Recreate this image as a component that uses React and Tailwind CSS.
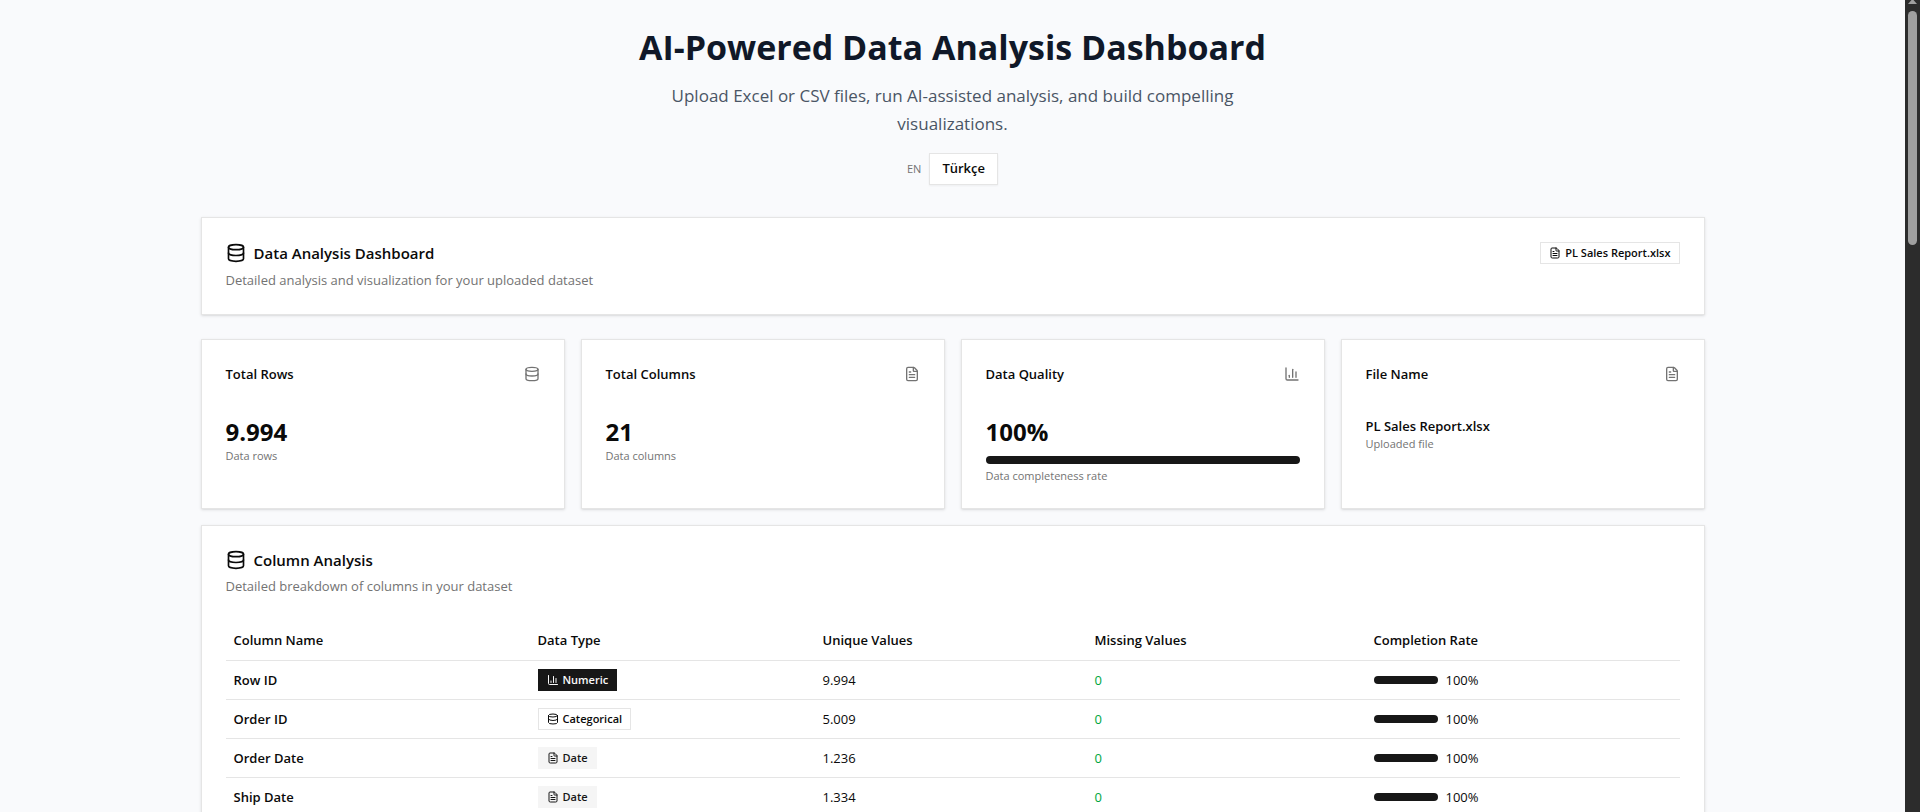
import { Database, FileText } from "lucide-react";

function ChartIcon({ className }) {
  return (
    <svg viewBox="0 0 24 24" fill="none" stroke="currentColor" strokeWidth="2" strokeLinecap="round" strokeLinejoin="round" className={className} aria-hidden="true">
      <path d="M3 3v16a2 2 0 0 0 2 2h16" />
      <path d="M18 17V9" />
      <path d="M13 17V5" />
      <path d="M8 17v-3" />
    </svg>
  );
}

const card = "border border-[#e5e5e5] bg-white p-6 shadow-sm";

function Badge({ icon: Icon, tone, children }) {
  return (
    <span className={`inline-flex h-[22px] items-center gap-1 border px-2 text-[11px] leading-4 font-semibold whitespace-nowrap ${tone}`}>
      <Icon className="size-3 shrink-0" />
      {children}
    </span>
  );
}

const outline = "border-[#e5e5e5] bg-white text-[#0a0a0a]";

const types = {
  Numeric: { icon: ChartIcon, tone: "border-[#171717] bg-[#171717] text-[#fafafa]" },
  Categorical: { icon: Database, tone: outline },
  Date: { icon: FileText, tone: "border-[#f5f5f5] bg-[#f5f5f5] text-[#171717]" },
};

const rows = [
  ["Row ID", "Numeric", "9.994"],
  ["Order ID", "Categorical", "5.009"],
  ["Order Date", "Date", "1.236"],
  ["Ship Date", "Date", "1.334"],
];

function StatCard({ title, icon: Icon, children }) {
  return (
    <section className={card}>
      <div className="flex h-5 items-center justify-between">
        <h3 className="text-[13px] leading-5 font-semibold">{title}</h3>
        <Icon className="size-4 text-[#737373]" />
      </div>
      <div className="mt-8">{children}</div>
    </section>
  );
}

const title = "flex items-center gap-2 text-[15px] leading-5 font-semibold";
const description = "mt-[6px] text-[13px] leading-5 text-[#737373]";
const value = "text-2xl leading-8 font-bold";
const caption = "text-[11px] leading-4 text-[#737373]";

export default function App() {
  return (
    <div className="flex h-screen overflow-hidden bg-[#f9fafc] font-['Open_Sans','Noto_Sans',sans-serif] text-[#0a0a0a]">
      <main className="min-w-0 flex-1 overflow-hidden">
        <div className="mx-auto max-w-[1536px] px-4 pt-[27px]">
          <header className="flex flex-col items-center text-center">
            <h1 className="text-[34px] leading-10 font-bold text-[#101828]">AI-Powered Data Analysis Dashboard</h1>
            <p className="mt-[15px] max-w-[600px] text-[17px] leading-7 text-[#4a5565]">
              Upload Excel or CSV files, run AI-assisted analysis, and build compelling visualizations.
            </p>
            <div className="mt-[15px] flex items-center gap-2">
              <span className="text-[11px] leading-4 text-[#737373]">EN</span>
              <button type="button" className="h-8 border border-[#e5e5e5] bg-white px-3 text-[13px] font-semibold shadow-xs">
                Türkçe
              </button>
            </div>
          </header>

          <section className={`mt-8 ${card}`}>
            <div className="flex items-center justify-between">
              <h2 className={title}>
                <Database className="size-5" />
                Data Analysis Dashboard
              </h2>
              <Badge icon={FileText} tone={outline}>PL Sales Report.xlsx</Badge>
            </div>
            <p className={description}>Detailed analysis and visualization for your uploaded dataset</p>
          </section>

          <div className="mt-6 grid grid-cols-4 gap-4">
            <StatCard title="Total Rows" icon={Database}>
              <p className={value}>9.994</p>
              <p className={caption}>Data rows</p>
            </StatCard>
            <StatCard title="Total Columns" icon={FileText}>
              <p className={value}>21</p>
              <p className={caption}>Data columns</p>
            </StatCard>
            <StatCard title="Data Quality" icon={ChartIcon}>
              <p className={value}>100%</p>
              <div className="mt-2 h-2 rounded-full bg-[#171717]" />
              <p className={`mt-1 ${caption}`}>Data completeness rate</p>
            </StatCard>
            <StatCard title="File Name" icon={FileText}>
              <p className="truncate text-[13px] leading-5 font-semibold">PL Sales Report.xlsx</p>
              <p className={caption}>Uploaded file</p>
            </StatCard>
          </div>

          <section className={`mt-4 ${card}`}>
            <h2 className={title}>
              <Database className="size-5" />
              Column Analysis
            </h2>
            <p className={description}>Detailed breakdown of columns in your dataset</p>
            <table className="mt-6 w-full table-fixed text-left text-[13px] leading-5">
              <colgroup>
                <col className="w-[304px]" />
                <col className="w-[285px]" />
                <col className="w-[272px]" />
                <col className="w-[279px]" />
                <col className="w-[314px]" />
              </colgroup>
              <thead>
                <tr className="h-10 border-b border-[#e5e5e5]">
                  {["Column Name", "Data Type", "Unique Values", "Missing Values", "Completion Rate"].map((h) => (
                    <th key={h} scope="col" className="px-2 font-semibold">{h}</th>
                  ))}
                </tr>
              </thead>
              <tbody>
                {rows.map(([name, type, unique]) => (
                  <tr key={name} className="h-[39px] border-b border-[#e5e5e5]">
                    <td className="px-2 font-semibold">{name}</td>
                    <td className="px-2">
                      <div className="flex">
                        <Badge {...types[type]}>{type}</Badge>
                      </div>
                    </td>
                    <td className="px-2">{unique}</td>
                    <td className="px-2 text-[#00a63e]">0</td>
                    <td className="px-2">
                      <div className="flex items-center gap-2">
                        <div className="h-2 w-16 rounded-full bg-[#171717]" />
                        <span>100%</span>
                      </div>
                    </td>
                  </tr>
                ))}
              </tbody>
            </table>
          </section>
        </div>
      </main>
      <div className="flex w-[15px] shrink-0 flex-col items-center bg-[#2c2c2c]" aria-hidden="true">
        <svg viewBox="0 0 9 4" className="h-1 w-[9px] shrink-0 fill-[#9f9f9f]">
          <path d="M3.5 0h2L9 4H0z" />
        </svg>
        <div className="mt-[7px] h-[234px] w-[9px] rounded-full bg-[#9f9f9f]" />
      </div>
    </div>
  );
}
